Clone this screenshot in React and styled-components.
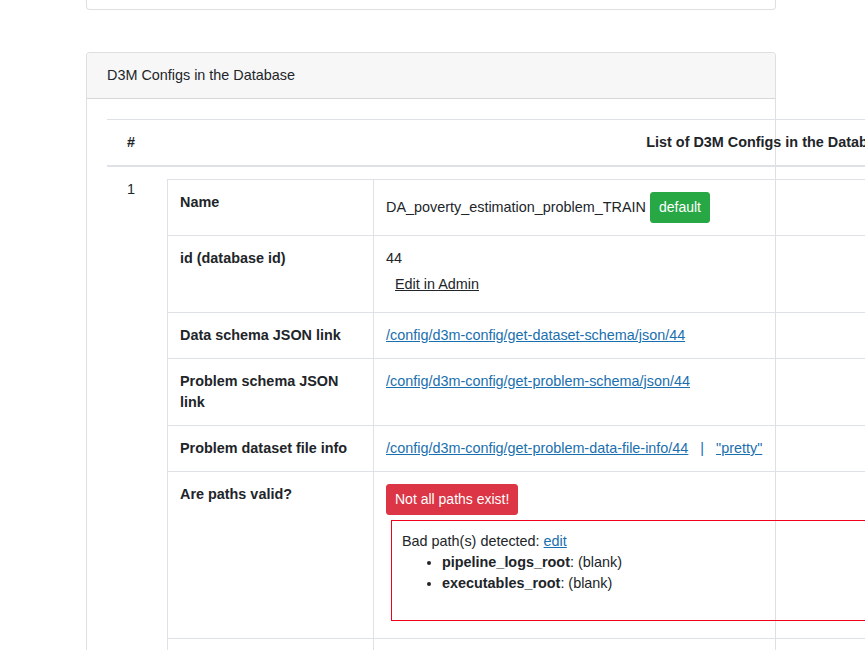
import React from "react";
import styled, { createGlobalStyle } from "styled-components";

const GlobalStyle = createGlobalStyle`
  html, body {
    margin: 0;
    padding: 0;
    overflow: hidden;
    background: #ffffff;
  }
  body {
    font-family: "Liberation Sans", Arial, sans-serif;
    font-size: 14.4px;
    line-height: 21px;
    color: #212529;
  }
`;

const Page = styled.div`
  width: 690px;
  margin-left: 86px;
  margin-top: -40px;
`;

const Card = styled.div`
  border: 1px solid rgba(0, 0, 0, 0.125);
  border-radius: 4px;
  background: #ffffff;
  margin-bottom: ${(props) => props.gap || 0}px;
  height: ${(props) => (props.height ? `${props.height}px` : "auto")};
  box-sizing: border-box;
`;

const CardHeader = styled.div`
  padding: 12px 20px;
  background: #f7f7f7;
  border-bottom: 1px solid rgba(0, 0, 0, 0.125);
  border-radius: 3px 3px 0 0;
`;

const CardBody = styled.div`
  padding: 20px;
  height: 700px;
`;

const OuterTable = styled.table`
  width: 1276px;
  border-collapse: collapse;
`;

const HeadCell = styled.th`
  padding: 12px;
  padding-left: ${(props) => props.left || 12}px;
  border-top: 1px solid #dee2e6;
  border-bottom: 2px solid #dee2e6;
  text-align: ${(props) => props.align || "left"};
  font-weight: bold;
  vertical-align: bottom;
  width: ${(props) => (props.width ? `${props.width}px` : "auto")};
`;

const Cell = styled.td`
  padding: 12px;
  padding-left: ${(props) => props.left || 12}px;
  vertical-align: top;
`;

const InnerTable = styled.table`
  width: 1204px;
  border-collapse: collapse;
  border: 1px solid #dee2e6;
`;

const Label = styled.td`
  width: 181px;
  padding: 12px;
  border: 1px solid #dee2e6;
  font-weight: bold;
  vertical-align: top;
`;

const Value = styled.td`
  padding: 12px;
  border: 1px solid #dee2e6;
  vertical-align: top;
`;

const Link = styled.a`
  color: #1a6fae;
  text-decoration: underline;
`;

const Badge = styled.span`
  display: inline-block;
  padding: 4px 8px;
  border: 1px solid ${(props) => props.color};
  border-radius: 3px;
  background: ${(props) => props.color};
  color: #ffffff;
  font-size: 14px;
  line-height: 21px;
  margin-left: ${(props) => props.left || 0}px;
`;

const AdminButton = styled.a`
  display: inline-block;
  padding: 4px 8px;
  border: 1px solid transparent;
  color: #212529;
  text-decoration: underline;
`;

const Separator = styled.span`
  color: #1a6fae;
  margin: 0 12px;
`;

const PathBox = styled.div`
  border: 1px solid #f0001c;
  margin: 5px 0 5px 5px;
  padding: 10px;
`;

const PathList = styled.ul`
  margin: 0 0 16px;
  padding-left: 40px;
`;

const rows = [
  {
    label: "Data schema JSON link",
    href: "/config/d3m-config/get-dataset-schema/json/44",
  },
  {
    label: "Problem schema JSON link",
    href: "/config/d3m-config/get-problem-schema/json/44",
  },
];

const badPaths = ["pipeline_logs_root", "executables_root"];

const App = () => (
  <>
    <GlobalStyle />
    <Page>
      <Card height={50} gap={42} />
      <Card>
        <CardHeader>D3M Configs in the Database</CardHeader>
        <CardBody>
          <OuterTable>
            <thead>
              <tr>
                <HeadCell left={20} width={48}>
                  #
                </HeadCell>
                <HeadCell align="center">
                  List of D3M Configs in the Database
                </HeadCell>
              </tr>
            </thead>
            <tbody>
              <tr>
                <Cell left={20}>1</Cell>
                <Cell>
                  <InnerTable>
                    <tbody>
                      <tr>
                        <Label>Name</Label>
                        <Value>
                          DA_poverty_estimation_problem_TRAIN
                          <Badge color="#28a745" left={4}>
                            default
                          </Badge>
                        </Value>
                      </tr>
                      <tr>
                        <Label>id (database id)</Label>
                        <Value>
                          44
                          <br />
                          <AdminButton href="#">Edit in Admin</AdminButton>
                        </Value>
                      </tr>
                      {rows.map((row) => (
                        <tr key={row.label}>
                          <Label>{row.label}</Label>
                          <Value>
                            <Link href="#">{row.href}</Link>
                          </Value>
                        </tr>
                      ))}
                      <tr>
                        <Label>Problem dataset file info</Label>
                        <Value>
                          <Link href="#">
                            /config/d3m-config/get-problem-data-file-info/44
                          </Link>
                          <Separator>|</Separator>
                          <Link href="#">"pretty"</Link>
                        </Value>
                      </tr>
                      <tr>
                        <Label>Are paths valid?</Label>
                        <Value>
                          <Badge color="#dc3545">Not all paths exist!</Badge>
                          <PathBox>
                            Bad path(s) detected: <Link href="#">edit</Link>
                            <PathList>
                              {badPaths.map((p) => (
                                <li key={p}>
                                  <b>{p}</b>: (blank)
                                </li>
                              ))}
                            </PathList>
                          </PathBox>
                        </Value>
                      </tr>
                      <tr>
                        <Label>&nbsp;</Label>
                        <Value>&nbsp;</Value>
                      </tr>
                    </tbody>
                  </InnerTable>
                </Cell>
              </tr>
            </tbody>
          </OuterTable>
        </CardBody>
      </Card>
    </Page>
  </>
);

export default App;
